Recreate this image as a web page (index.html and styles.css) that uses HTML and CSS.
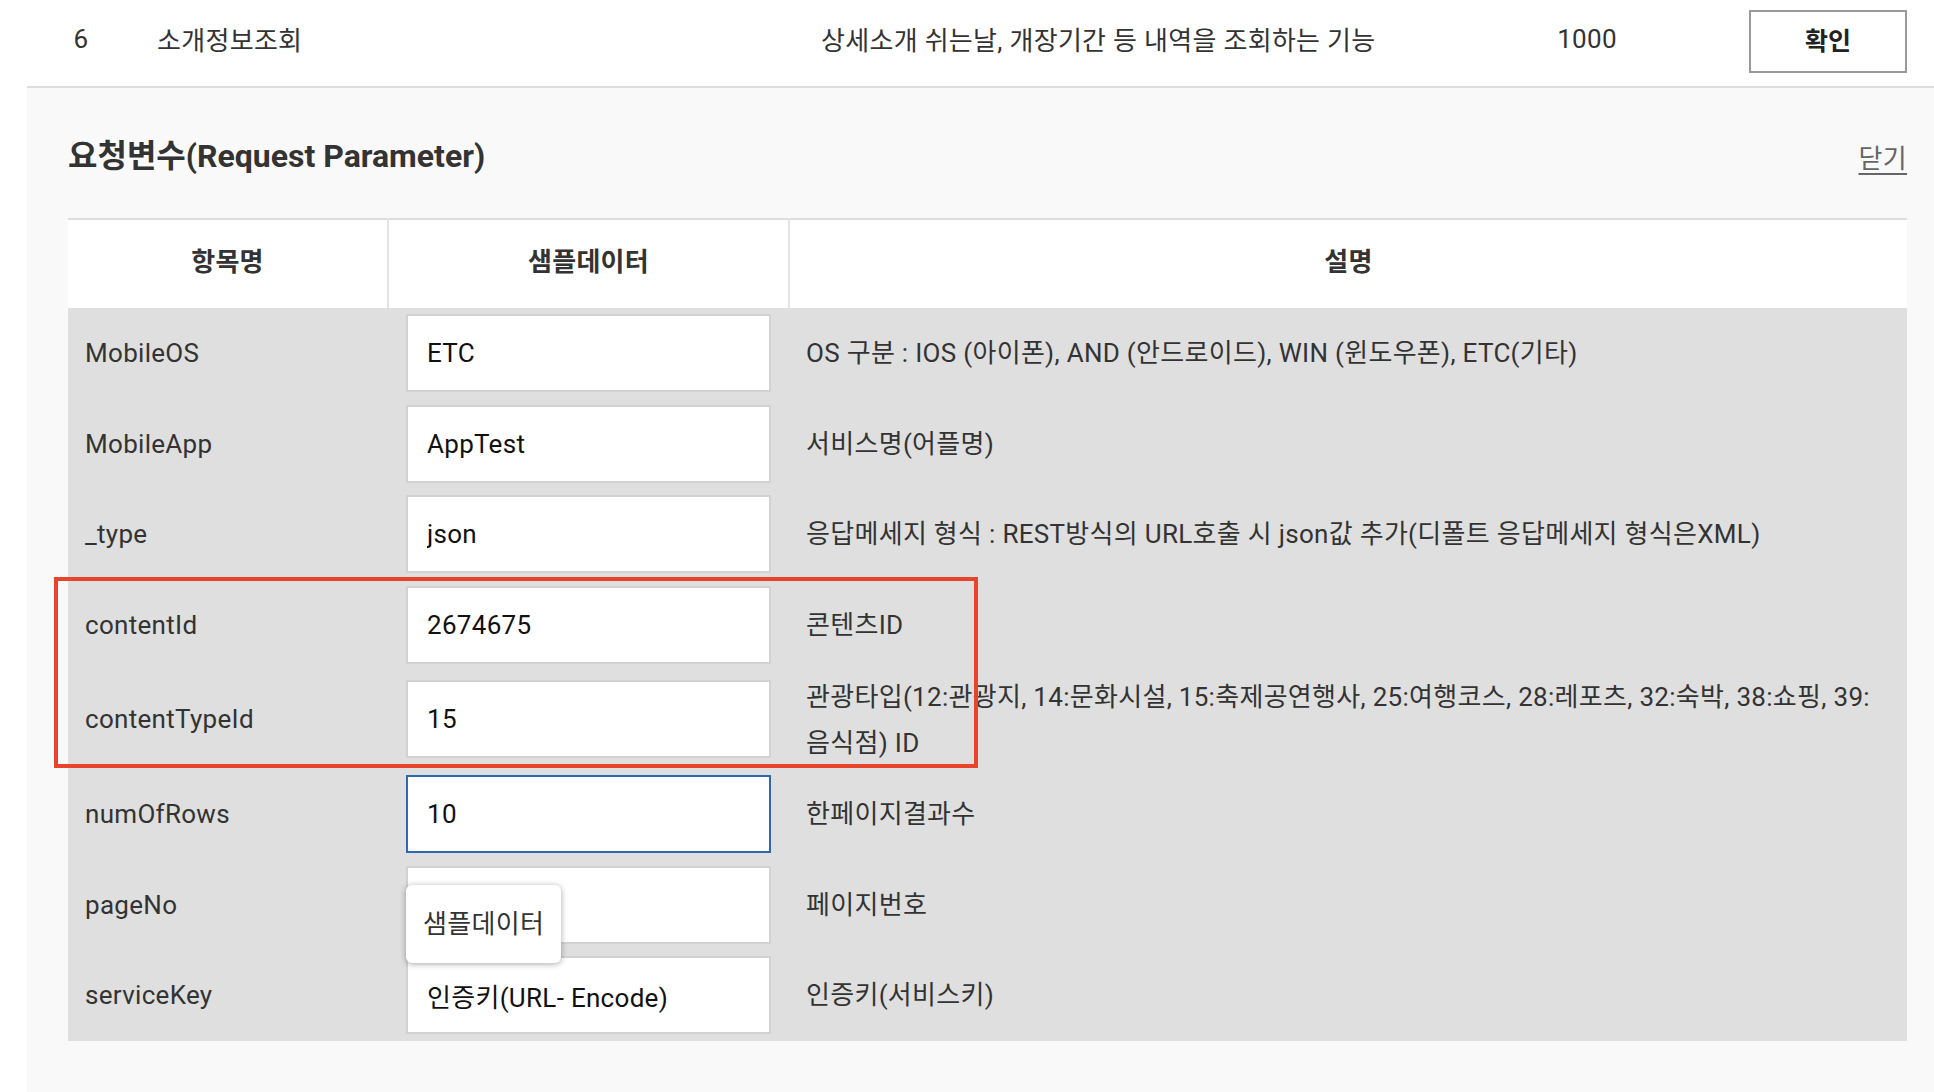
FILE: index.html
```html
<!DOCTYPE html>
<html lang="ko">
<head>
<meta charset="utf-8">
<title>요청변수</title>
<link rel="stylesheet" href="styles.css">
</head>
<body>
<div class="page">
  <div class="toprow">
    <span class="c-no">6</span>
    <span class="c-name">소개정보조회</span>
    <span class="c-desc">상세소개 쉬는날, 개장기간 등 내역을 조회하는 기능</span>
    <span class="c-cnt">1000</span>
    <button class="btn" type="button">확인</button>
  </div>

  <section class="panel">
    <div class="panel-head">
      <h3 class="panel-title">요청변수(Request Parameter)</h3>
      <a class="close" href="#">닫기</a>
    </div>

    <table class="params">
      <colgroup>
        <col class="col-name">
        <col class="col-sample">
        <col class="col-desc">
      </colgroup>
      <thead>
        <tr>
          <th>항목명</th>
          <th>샘플데이터</th>
          <th>설명</th>
        </tr>
      </thead>
      <tbody>
        <tr>
          <td class="name">MobileOS</td>
          <td class="sample"><input class="field" type="text" value="ETC"></td>
          <td class="desc">OS 구분 : IOS (아이폰), AND (안드로이드), WIN (윈도우폰), ETC(기타)</td>
        </tr>
        <tr>
          <td class="name">MobileApp</td>
          <td class="sample"><input class="field" type="text" value="AppTest"></td>
          <td class="desc">서비스명(어플명)</td>
        </tr>
        <tr>
          <td class="name">_type</td>
          <td class="sample"><input class="field" type="text" value="json"></td>
          <td class="desc">응답메세지 형식 : REST방식의 URL호출 시 json값 추가(디폴트 응답메세지 형식은XML)</td>
        </tr>
        <tr>
          <td class="name anchor">contentId<div class="highlight"></div></td>
          <td class="sample"><input class="field" type="text" value="2674675"></td>
          <td class="desc">콘텐츠ID</td>
        </tr>
        <tr>
          <td class="name">contentTypeId</td>
          <td class="sample"><input class="field" type="text" value="15"></td>
          <td class="desc two"><span class="line">관광타입(12:관광지, 14:문화시설, 15:축제공연행사, 25:여행코스, 28:레포츠, 32:숙박, 38:쇼핑, 39:</span><br>음식점) ID</td>
        </tr>
        <tr>
          <td class="name">numOfRows</td>
          <td class="sample"><input class="field focus" type="text" value="10"></td>
          <td class="desc">한페이지결과수</td>
        </tr>
        <tr>
          <td class="name">pageNo</td>
          <td class="sample anchor"><input class="field" type="text" value=""><div class="tip">샘플데이터</div></td>
          <td class="desc">페이지번호</td>
        </tr>
        <tr>
          <td class="name">serviceKey</td>
          <td class="sample"><input class="field" type="text" value="인증키(URL- Encode)"></td>
          <td class="desc">인증키(서비스키)</td>
        </tr>
      </tbody>
    </table>
  </section>
</div>
</body>
</html>
```

FILE: styles.css
```css
* {
  box-sizing: border-box;
}

html, body {
  margin: 0;
  padding: 0;
  background: #ffffff;
}

body {
  font-family: Roboto, "Noto Sans CJK KR", sans-serif;
  font-size: 26px;
  letter-spacing: 0.3px;
  color: #333333;
  overflow: hidden;
}

.page {
  margin-left: 27px;
  height: 1092px;
  display: flex;
  flex-direction: column;
}

/* ---- top list row ---- */
.toprow {
  display: grid;
  grid-template-columns: 108px 686px 679px 174px auto;
  align-items: center;
  height: 88px;
  padding-bottom: 9px;
  border-bottom: 2px solid #dedede;
  background: #ffffff;
}

.c-no {
  text-align: center;
}

.c-name {
  padding-left: 22px;
}

.c-cnt {
  text-align: center;
}

.btn {
  align-self: start;
  justify-self: start;
  margin-left: 75px;
  margin-top: 10px;
  width: 158px;
  height: 63px;
  padding: 0 0 5px;
  background: #ffffff;
  border: 2px solid #9a9a9a;
  font-family: Roboto, "Noto Sans CJK KR", sans-serif;
  font-size: 25px;
  font-weight: 700;
  color: #222222;
}

/* ---- panel ---- */
.panel {
  flex: 1;
  background: #f9f9f9;
  padding: 0 27px 0 41px;
}

.panel-head {
  height: 130px;
  display: flex;
  align-items: center;
  justify-content: space-between;
}

.panel-title {
  margin: 0;
  font-size: 32px;
  font-weight: 700;
  color: #333333;
  letter-spacing: 0;
}

.close {
  font-size: 26px;
  color: #666666;
  text-decoration: underline;
  text-underline-offset: 5px;
  padding-top: 6px;
}

/* ---- table ---- */
.params {
  width: 100%;
  border-collapse: collapse;
  border-top: 2px solid #dddddd;
  table-layout: fixed;
}

.col-name {
  width: 320px;
}

.col-sample {
  width: 401px;
}

.params thead th {
  height: 89px;
  padding: 0 0 9px;
  background: #ffffff;
  font-weight: 700;
  color: #333333;
  font-size: 26px;
  text-align: center;
  border-left: 2px solid #e4e4e4;
}

.params thead th:first-child {
  border-left: 0;
}

.params tbody td {
  background: #dfdfdf;
  vertical-align: middle;
  padding: 6px 17px 6.5px;
  line-height: 42px;
}

.params td.sample {
  padding: 6px 18px 6.5px;
}

.params td.desc.two {
  padding-top: 3.5px;
  padding-bottom: 3.5px;
  line-height: 46px;
}

.line {
  white-space: nowrap;
}

.field {
  display: block;
  width: 100%;
  height: 78px;
  border: 2px solid #d2d2d2;
  background: #ffffff;
  padding: 0 19px;
  font-family: Roboto, "Noto Sans CJK KR", sans-serif;
  font-size: 26px;
  letter-spacing: 0.3px;
  color: #111111;
  outline: none;
}

.field.focus {
  border-color: #2f67b1;
}

.anchor {
  position: relative;
}

/* red annotation box over two rows */
.highlight {
  position: absolute;
  left: -14px;
  top: -3px;
  width: 924px;
  height: 191px;
  border: 4px solid #e8432b;
  pointer-events: none;
}

/* autocomplete-like tooltip */
.tip {
  position: absolute;
  left: 18px;
  top: 25px;
  width: 155px;
  height: 78px;
  padding-left: 17px;
  display: flex;
  align-items: center;
  background: #ffffff;
  border-radius: 6px;
  box-shadow: 0 1px 6px rgba(0, 0, 0, 0.35);
  color: #333333;
  font-size: 26px;
  z-index: 2;
}
```
